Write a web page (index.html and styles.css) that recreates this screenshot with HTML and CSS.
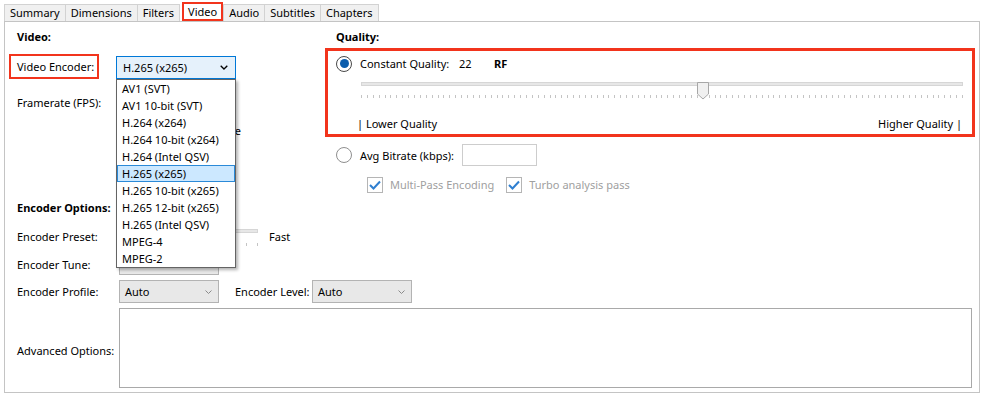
FILE: index.html
```html
<!DOCTYPE html>
<html>
<head>
<meta charset="utf-8">
<title>Video</title>
<link rel="stylesheet" href="styles.css">
</head>
<body>
<div class="window">
  <div class="tabs">
    <div class="tab">Summary</div>
    <div class="tab">Dimensions</div>
    <div class="tab">Filters</div>
    <div class="tab active">Video</div>
    <div class="tab">Audio</div>
    <div class="tab">Subtitles</div>
    <div class="tab">Chapters</div>
  </div>
  <div class="panel">
    <div class="top">
      <div class="col-video">
        <div class="heading v-heading">Video:</div>
        <div class="row row-encoder">
          <div class="label-hl">Video Encoder:</div>
          <div class="combo combo-focus">
            <span>H.265 (x265)</span>
            <svg class="chev" width="8" height="5" viewBox="0 0 8 5"><polyline points="0.7,0.7 4,4 7.3,0.7" fill="none" stroke="#000" stroke-width="1.3"/></svg>
          </div>
        </div>
        <div class="row row-fps">
          <div class="label">Framerate (FPS):</div>
          <div class="combo combo-grey combo-fps"></div>
        </div>
        <div class="fr-mode">Peak Framerate</div>
      </div>
      <div class="col-quality">
        <div class="heading q-heading">Quality:</div>
        <div class="qbox">
          <div class="cq-row">
            <span class="radio checked"></span>
            <span class="cq-label">Constant Quality:</span>
            <span class="cq-value">22</span>
            <span class="cq-unit">RF</span>
          </div>
          <div class="slider">
            <div class="track"></div>
            <svg class="thumb" width="12" height="18" viewBox="0 0 12 18"><path d="M0.5 0.5 H11.5 V12 L6 17 L0.5 12 Z" fill="#f0f0f0" stroke="#a7a7a7"/></svg>
            <div class="ticks"></div>
          </div>
          <div class="q-scale">
            <span>| Lower Quality</span>
            <span>Higher Quality |</span>
          </div>
        </div>
        <div class="avg-row">
          <span class="radio"></span>
          <span class="avg-label">Avg Bitrate (kbps):</span>
          <span class="textbox"></span>
        </div>
        <div class="check-row">
          <span class="check"><svg width="12" height="10" viewBox="0 0 12 10"><polyline points="1,5 4.5,8.5 11,1.5" fill="none" stroke="#2f7fd0" stroke-width="2"/></svg></span>
          <span class="check-label">Multi-Pass Encoding</span>
          <span class="check check-2"><svg width="12" height="10" viewBox="0 0 12 10"><polyline points="1,5 4.5,8.5 11,1.5" fill="none" stroke="#2f7fd0" stroke-width="2"/></svg></span>
          <span class="check-label">Turbo analysis pass</span>
        </div>
      </div>
    </div>
    <div class="options">
      <div class="heading">Encoder Options:</div>
      <div class="orow preset-row">
        <div class="olabel">Encoder Preset:</div>
        <div class="mini-slider">
          <div class="mini-track"></div>
          <div class="mini-ticks"></div>
        </div>
        <div class="fast">Fast</div>
      </div>
      <div class="orow tune-row">
        <div class="olabel">Encoder Tune:</div>
        <div class="combo combo-grey"></div>
      </div>
      <div class="orow profile-row">
        <div class="olabel">Encoder Profile:</div>
        <div class="combo combo-grey"><span>Auto</span><svg class="chev-grey" width="7" height="4" viewBox="0 0 7 4"><polyline points="0.5,0.5 3.5,3.5 6.5,0.5" fill="none" stroke="#8a8a8a" stroke-width="1"/></svg></div>
        <div class="level-label">Encoder Level:</div>
        <div class="combo combo-grey"><span>Auto</span><svg class="chev-grey" width="7" height="4" viewBox="0 0 7 4"><polyline points="0.5,0.5 3.5,3.5 6.5,0.5" fill="none" stroke="#8a8a8a" stroke-width="1"/></svg></div>
      </div>
      <div class="orow adv-row">
        <div class="olabel adv-label">Advanced Options:</div>
        <div class="textarea"></div>
      </div>
    </div>
  </div>
  <ul class="dropdown">
    <li>AV1 (SVT)</li>
    <li>AV1 10-bit (SVT)</li>
    <li>H.264 (x264)</li>
    <li>H.264 10-bit (x264)</li>
    <li>H.264 (Intel QSV)</li>
    <li class="sel">H.265 (x265)</li>
    <li>H.265 10-bit (x265)</li>
    <li>H.265 12-bit (x265)</li>
    <li>H.265 (Intel QSV)</li>
    <li>MPEG-4</li>
    <li>MPEG-2</li>
  </ul>
</div>
</body>
</html>
```
FILE: styles.css
```css
* { box-sizing: border-box; }
body {
  margin: 0;
  background: #fff;
  font-family: "Noto Sans", "Segoe UI", sans-serif;
  font-size: 11px;
  color: #000;
}
.window { position: relative; width: 981px; height: 396px; }

/* tabs */
.tabs { display: flex; height: 21px; padding: 4px 0 0 4px; }
.tab {
  height: 17px;
  line-height: 16px;
  padding: 0 5px;
  border: 1px solid #d2d2d2;
  border-bottom: none;
  background: #f0f0f0;
  margin-right: -1px;
  white-space: nowrap;
}
.tab.active {
  height: 19px;
  margin: -2px 0 0 3px;
  padding: 0 4px;
  line-height: 15px;
  border: 2px solid #f2341c;
  background: #fff;
}

/* panel */
.panel {
  margin-left: 4px;
  width: 976px;
  height: 372px;
  border: 1px solid #c4c4c4;
}
.top { display: flex; height: 178px; }
.col-video { width: 320px; }
.col-quality { width: 650px; }
.heading { font-weight: 700; height: 16px; line-height: 16px; padding-left: 12px; }
.v-heading { margin-top: 7px; }

.row { display: flex; }
.row-encoder { margin-top: 9px; align-items: flex-start; }
.label-hl {
  margin-left: 4px;
  width: 90px;
  height: 25px;
  border: 2px solid #f2341c;
  padding-left: 6px;
  line-height: 21px;
  white-space: nowrap;
}
.combo {
  display: flex;
  align-items: center;
  justify-content: space-between;
  width: 100px;
  height: 22px;
  padding: 0 6px 0 5px;
  white-space: nowrap;
}
.combo-focus {
  margin: 2px 0 0 17px;
  width: 120px;
  height: 23px;
  padding-left: 6px;
  border: 1px solid #0078d7;
  background: #e5f1fb;
}
.chev { margin-right: 1px; }
.combo-grey { border: 1px solid #b3b3b3; background: #e8e8e8; }
.row-fps { margin-top: 13px; height: 22px; align-items: center; }
.label { width: 111px; padding-left: 12px; line-height: 22px; white-space: nowrap; }
.combo-fps { width: 120px; }
.fr-mode { margin-top: 8px; width: 236px; height: 18px; line-height: 18px; text-align: right; white-space: nowrap; }

/* quality */
.q-heading { margin-top: 7px; padding-left: 11px; }
.qbox {
  margin-top: 3px;
  height: 89px;
  border: 3px solid #f2341c;
  padding: 4px 0 0 8px;
}
.cq-row { display: flex; align-items: center; height: 17px; }
.radio {
  width: 16px;
  height: 16px;
  border: 1px solid #8f8f8f;
  border-radius: 50%;
  background: #fff;
  display: flex;
  align-items: center;
  justify-content: center;
  flex: none;
}
.radio.checked { border-color: #4a4a4a; }
.radio.checked::after {
  content: "";
  width: 9px;
  height: 9px;
  border-radius: 50%;
  background: #0c5dac;
}
.cq-label { margin-left: 8px; width: 99px; }
.cq-value { width: 35px; }
.cq-unit { font-weight: 700; }
.slider { position: relative; margin: 10px 0 0 25px; width: 602px; height: 23px; }
.track { margin-top: 6px; height: 4px; background: #e7e7e7; border: 1px solid #d6d6d6; }
.thumb { position: absolute; left: 336px; top: 0; }
.ticks {
  margin-top: 9px;
  height: 3px;
  background: repeating-linear-gradient(to right, #c4c4c4 0 1px, transparent 1px 5.892px);
}
.q-scale {
  display: flex;
  justify-content: space-between;
  margin: 11px 0 0 21px;
  width: 605px;
  line-height: 16px;
  height: 16px;
}
.avg-row { display: flex; align-items: center; margin-top: 7px; height: 22px; padding-left: 11px; }
.avg-label { margin-left: 8px; width: 102px; }
.textbox { width: 75px; height: 22px; border: 1px solid #cdcdcd; background: #fff; }
.check-row { display: flex; align-items: center; margin-top: 10px; height: 17px; padding-left: 42px; }
.check {
  width: 16px;
  height: 16px;
  border: 1px solid #b5b5b5;
  display: flex;
  align-items: center;
  justify-content: center;
  flex: none;
}
.check-2 { margin-left: 12px; }
.check-label { margin-left: 7px; color: #a0a0a0; white-space: nowrap; }

/* options */
.orow { display: flex; align-items: center; padding-left: 12px; }
.olabel { width: 102px; white-space: nowrap; }
.preset-row { margin-top: 10px; height: 20px; }
.mini-slider { width: 139px; height: 20px; }
.mini-track { margin-top: 3px; height: 4px; background: #e7e7e7; border: 1px solid #d6d6d6; }
.mini-ticks {
  margin-top: 10px;
  height: 3px;
  background: repeating-linear-gradient(to left, #c4c4c4 0 1px, transparent 1px 11px);
}
.fast { margin-left: 11px; }
.tune-row { margin-top: 7px; height: 22px; }
.profile-row { margin-top: 5px; height: 23px; }
.profile-row .combo { height: 23px; }
.level-label { margin-left: 16px; width: 77px; white-space: nowrap; }
.adv-row { margin-top: 5px; }
.adv-label { padding-top: 4px; }
.textarea { width: 853px; height: 80px; border: 1px solid #a9a9a9; background: #fff; }

/* dropdown list */
.dropdown {
  position: absolute;
  left: 116px;
  top: 79px;
  width: 120px;
  height: 189px;
  margin: 0;
  padding: 0;
  list-style: none;
  background: #fff;
  border: 1px solid #646464;
  box-shadow: 2px 2px 3px rgba(0, 0, 0, 0.3);
}
.dropdown li {
  height: 17px;
  line-height: 17px;
  padding-left: 5px;
  white-space: nowrap;
}
.dropdown li.sel {
  background: #cce8ff;
  border: 1px solid #2b8ad8;
  line-height: 15px;
  padding-left: 4px;
}
```
